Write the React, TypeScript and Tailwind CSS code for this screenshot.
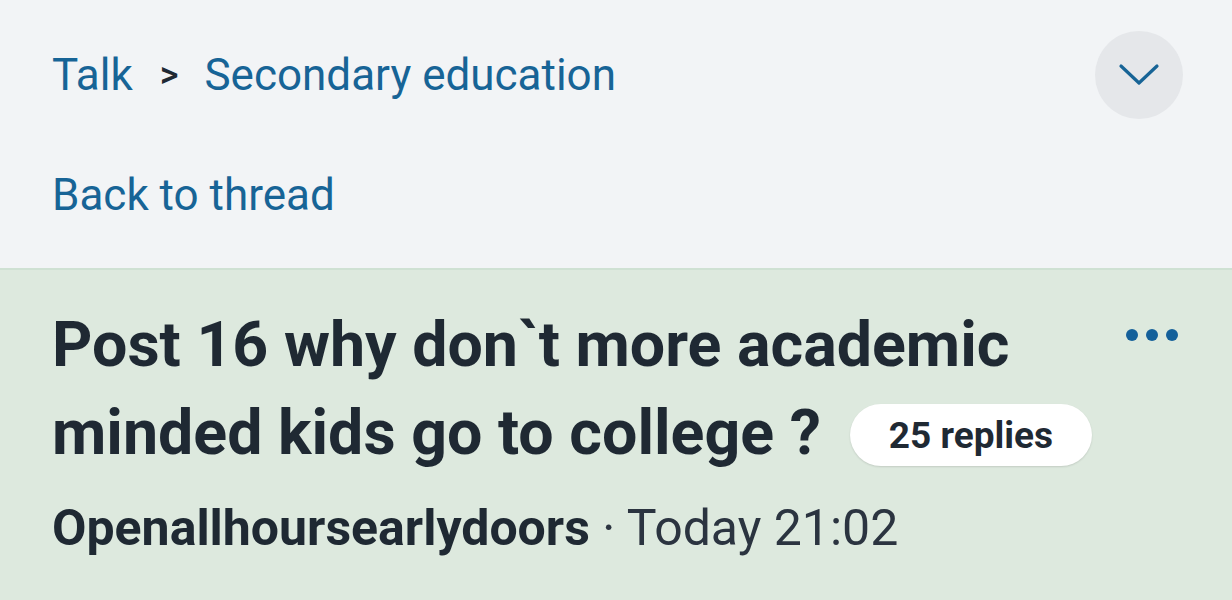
export default function App() {
  return (
    <div className="w-[1232px] h-[600px] overflow-hidden bg-[#f2f4f6] font-['Roboto',sans-serif]">
      <header className="pl-[52px] pr-[49px] pt-[31px] pb-[47px]">
        <div className="flex items-center justify-between">
          <nav className="flex items-center text-[44px] leading-[52px] text-[#176496]">
            <a>Talk</a>
            <span className="ml-[27px] mr-[26px] text-[36px] leading-none font-medium text-[#1f2933]">&gt;</span>
            <a>Secondary education</a>
          </nav>
          <button className="w-[88px] h-[88px] rounded-full bg-[#e5e7ea] flex items-center justify-center">
            <svg width="42" height="24" viewBox="0 0 42 24" fill="none">
              <path d="M3 3 L21 20 L39 3" stroke="#176496" strokeWidth="3.2" strokeLinecap="round" strokeLinejoin="round" />
            </svg>
          </button>
        </div>
        <a className="block mt-[50px] text-[44px] leading-[52px] text-[#176496]">Back to thread</a>
      </header>

      <section className="border-t-2 border-[#cfe1d3] bg-[#dde9de] pl-[52px] pr-[54px] pt-[31px] h-[400px]">
        <div className="flex items-start justify-between">
          <h1 className="text-[62.7px] leading-[88px] font-bold text-[#1f2933] w-[1060px]">
            Post 16 why don`t more academic minded kids go to college ?
            <span className="inline-flex items-center justify-center align-middle ml-[29px] -mt-[4px] h-[62px] px-[39px] rounded-full bg-white shadow-[0_1px_2px_rgba(0,0,0,0.12)] text-[37px] leading-none font-bold text-[#1f2933]">
              25 replies
            </span>
          </h1>
          <button className="flex gap-[8px] mt-[28px]">
            <span className="w-[12px] h-[12px] rounded-full bg-[#14609a]" />
            <span className="w-[12px] h-[12px] rounded-full bg-[#14609a]" />
            <span className="w-[12px] h-[12px] rounded-full bg-[#14609a]" />
          </button>
        </div>
        <p className="mt-[22px] text-[50px] leading-[58px] text-[#1f2933]">
          <span className="font-bold">Openallhoursearlydoors</span>
          <span className="text-[#2b3440]"> · Today 21:02</span>
        </p>
      </section>
    </div>
  );
}
